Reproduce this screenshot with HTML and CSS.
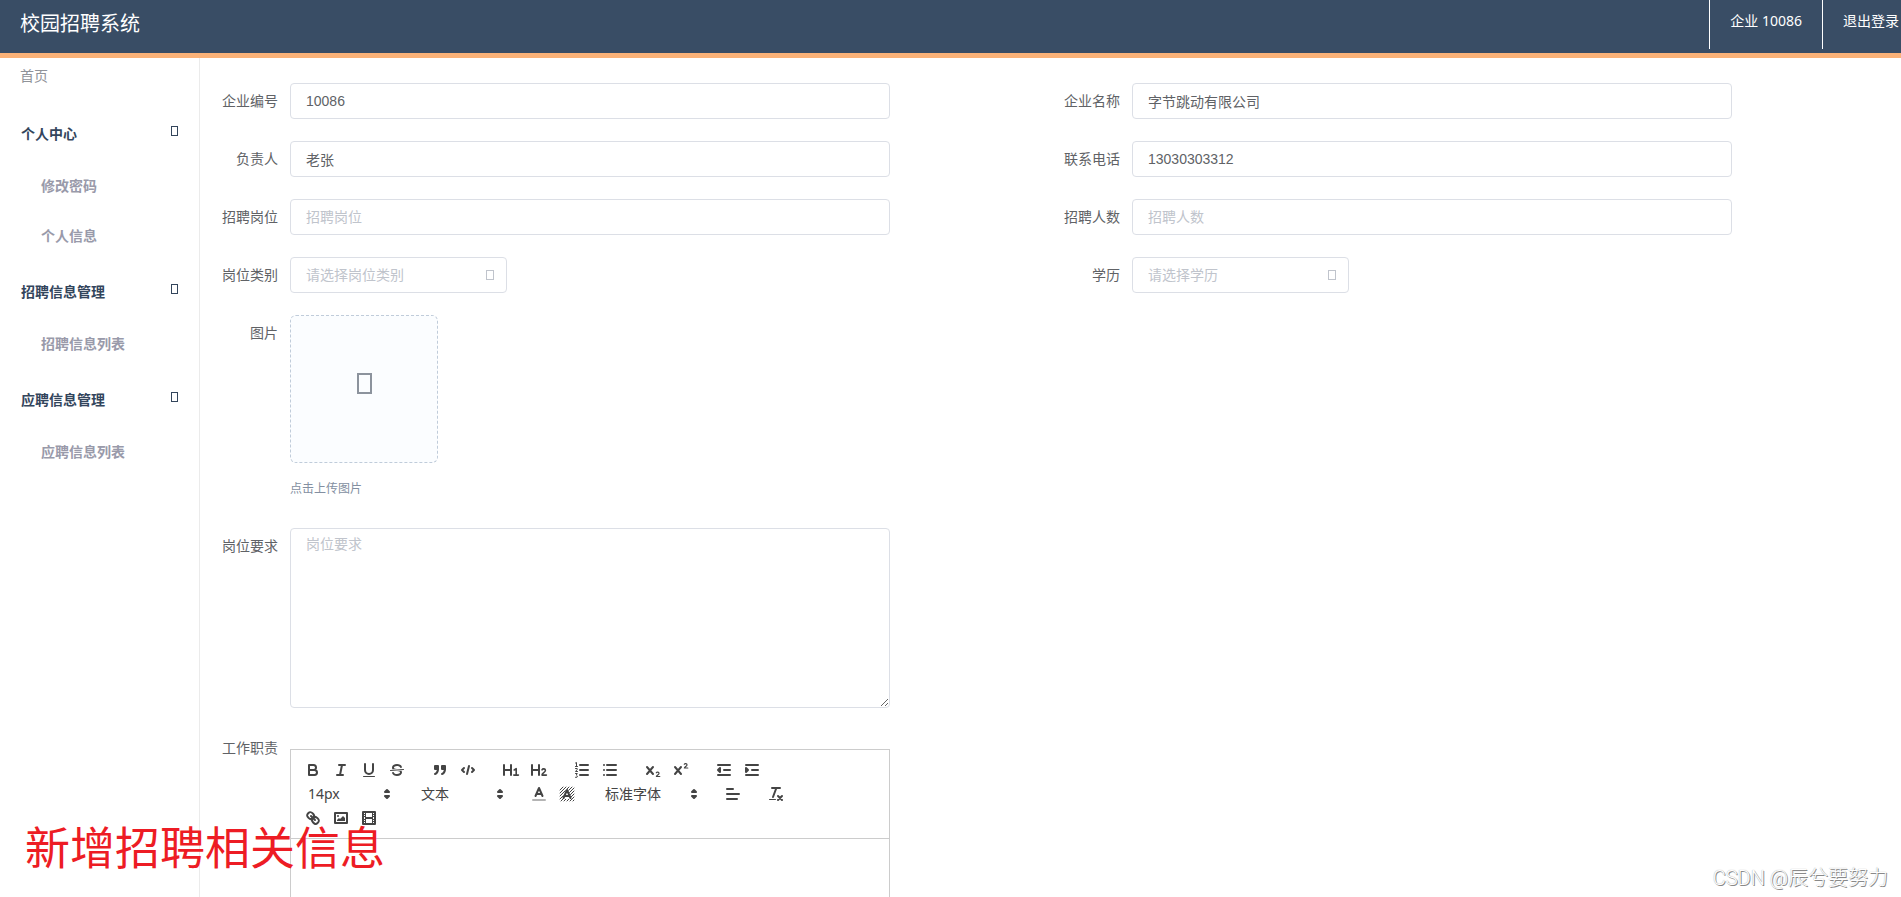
FILE: index.html
```html
<!DOCTYPE html>
<html lang="zh-CN">
<head>
<meta charset="utf-8">
<title>校园招聘系统</title>
<link rel="stylesheet" href="styles.css">
</head>
<body>
<header class="topbar">
  <h1 class="brand">校园招聘系统</h1>
  <nav class="account">
    <a class="account-link" href="#">企业 10086</a>
    <a class="account-link account-exit" href="#">退出登录</a>
  </nav>
</header>
<div class="layout">
  <nav class="sidebar">
    <a class="home" href="#">首页</a>
    <button class="group" type="button">个人中心<span class="box"></span></button>
    <a class="entry" href="#">修改密码</a>
    <a class="entry" href="#">个人信息</a>
    <button class="group" type="button">招聘信息管理<span class="box"></span></button>
    <a class="entry" href="#">招聘信息列表</a>
    <button class="group" type="button">应聘信息管理<span class="box"></span></button>
    <a class="entry" href="#">应聘信息列表</a>
  </nav>
  <main class="content">
    <form class="form">
      <div class="field"><label class="label" for="code">企业编号</label><input class="control" id="code" type="text" value="10086"></div>
      <div class="field"><label class="label" for="company">企业名称</label><input class="control" id="company" type="text" value="字节跳动有限公司"></div>
      <div class="field"><label class="label" for="owner">负责人</label><input class="control" id="owner" type="text" value="老张"></div>
      <div class="field"><label class="label" for="phone">联系电话</label><input class="control" id="phone" type="text" value="13030303312"></div>
      <div class="field"><label class="label" for="post">招聘岗位</label><input class="control" id="post" type="text" placeholder="招聘岗位"></div>
      <div class="field"><label class="label" for="count">招聘人数</label><input class="control" id="count" type="text" placeholder="招聘人数"></div>
      <div class="field"><label class="label" for="kind">岗位类别</label>
        <div class="select"><select class="control choice" id="kind"><option>请选择岗位类别</option></select><span class="box box-muted"></span></div></div>
      <div class="field"><label class="label" for="degree">学历</label>
        <div class="select"><select class="control choice" id="degree"><option>请选择学历</option></select><span class="box box-muted"></span></div></div>
      <div class="field field-row"><label class="label" for="picture">图片</label>
        <div class="upload">
          <button class="upload-card" id="picture" type="button" aria-label="上传图片"><span class="box box-large"></span></button>
          <p class="upload-tip">点击上传图片</p>
        </div></div>
      <div class="field field-row"><label class="label" for="demand">岗位要求</label><textarea class="control area" id="demand" placeholder="岗位要求"></textarea></div>
      <div class="field field-row"><label class="label" for="duty">工作职责</label>
        <div class="editor">
          <div class="toolbar">
            <span class="tools">
              <button class="tool" type="button" aria-label="粗体"><svg viewBox="0 0 18 18"><path d="M5 4H9.5A2.5 2.5 0 0 1 9.5 9H5ZM5 9H10.5A2.5 2.5 0 0 1 10.5 14H5Z"/></svg></button>
              <button class="tool" type="button" aria-label="斜体"><svg viewBox="0 0 18 18"><path d="M7 4H13M5 14H11M8 14L10 4"/></svg></button>
              <button class="tool" type="button" aria-label="下划线"><svg viewBox="0 0 18 18"><path d="M5 3V9a4 4 0 0 0 8 0V3"/><rect class="solid" x="3" y="15" width="12" height="1" rx=".5"/></svg></button>
              <button class="tool" type="button" aria-label="删除线"><svg viewBox="0 0 18 18"><path class="thin" d="M15.5 8.5L2.5 9.5"/><path class="solid" d="M9.007,8C6.542,7.791,6,7.519,6,6.5,6,5.792,7.283,5,9,5c1.571,0,2.765.679,2.969,1.309a1,1,0,0,0,1.9-.617C13.356,4.106,11.354,3,9,3,6.2,3,4,4.538,4,6.5a3.2,3.2,0,0,0,.5,1.843Z"/><path class="solid" d="M8.984,10C11.457,10.208,12,10.479,12,11.5c0,.708-1.283,1.5-3,1.5-1.571,0-2.765-.679-2.969-1.309a1,1,0,1,0-1.9.617C4.644,13.894,6.646,15,9,15c2.8,0,5-1.538,5-3.5a3.2,3.2,0,0,0-.5-1.843Z"/></svg></button>
            </span>
            <span class="tools">
              <button class="tool" type="button" aria-label="引用"><svg viewBox="0 0 18 18"><g class="filled"><rect x="4" y="5" width="3" height="3"/><rect x="11" y="5" width="3" height="3"/><path d="M7,8c0,4.031-3,5-3,5"/><path d="M14,8c0,4.031-3,5-3,5"/></g></svg></button>
              <button class="tool" type="button" aria-label="代码"><svg viewBox="0 0 18 18"><path d="M5 7L3 9L5 11M13 7L15 9L13 11M10 5L8 13"/></svg></button>
            </span>
            <span class="tools">
              <button class="tool" type="button" aria-label="标题 1"><svg viewBox="0 0 18 18"><path d="M2 4V14M9 4V14M2 9H9"/><path class="mid" d="M12.2 9L14.2 7.7V14M11.8 14.1H16.4"/></svg></button>
              <button class="tool" type="button" aria-label="标题 2"><svg viewBox="0 0 18 18"><path d="M2 4V14M9 4V14M2 9H9"/><path class="mid" d="M12 8.8C12.8 7.3 15.5 7.6 15.4 9.5C15.3 11.4 12 12 12 14.1H16.4"/></svg></button>
            </span>
            <span class="tools">
              <button class="tool" type="button" aria-label="有序列表"><svg viewBox="0 0 18 18"><path d="M7 4H15M7 9H15M7 14H15"/><path class="thin" d="M2.5 2L3.5 1.5V5.5M2.5 5.5H4.5M2.5 7.5H4.2V8.5L2.5 10.5H4.5M2.5 12.5H4.3L3.3 14L4.4 15L3.9 16.3H2.5"/></svg></button>
              <button class="tool" type="button" aria-label="无序列表"><svg viewBox="0 0 18 18"><path d="M6 4H15M6 9H15M6 14H15M3 4V4M3 9V9M3 14V14"/></svg></button>
            </span>
            <span class="tools">
              <button class="tool" type="button" aria-label="下标"><svg viewBox="0 0 18 18"><path d="M3 6L9 13M9 6L3 13"/><path class="digit" d="M12.3 11.8C12.9 10.8 15.2 11 15 12.5C14.9 13.7 12.6 14.4 12.4 15.5H15.8"/></svg></button>
              <button class="tool" type="button" aria-label="上标"><svg viewBox="0 0 18 18"><path d="M3 6L9 13M9 6L3 13"/><path class="digit" d="M12.3 3.3C12.9 2.3 15.2 2.5 15 4C14.9 5.2 12.6 5.9 12.4 7H15.8"/></svg></button>
            </span>
            <span class="tools">
              <button class="tool" type="button" aria-label="减少缩进"><svg viewBox="0 0 18 18"><path d="M3 4H15M9 9H15M3 14H15"/><path class="filled" d="M5 7V11L3 9Z"/></svg></button>
              <button class="tool" type="button" aria-label="增加缩进"><svg viewBox="0 0 18 18"><path d="M3 4H15M9 9H15M3 14H15"/><path class="filled" d="M3 7V11L5 9Z"/></svg></button>
            </span>
            <span class="tools picker">
              <select class="pick" aria-label="字号"><option>14px</option></select>
              <svg class="arrows" viewBox="0 0 18 18"><path class="filled" d="M7 11L9 13L11 11ZM7 7L9 5L11 7Z"/></svg>
            </span>
            <span class="tools picker">
              <select class="pick" aria-label="段落格式"><option>文本</option></select>
              <svg class="arrows" viewBox="0 0 18 18"><path class="filled" d="M7 11L9 13L11 11ZM7 7L9 5L11 7Z"/></svg>
            </span>
            <span class="tools">
              <button class="tool" type="button" aria-label="文字颜色"><svg viewBox="0 0 18 18"><path class="faint" d="M3 15H15"/><path d="M5.5 11L9 3L12.5 11M11.6 9H6.4"/></svg></button>
              <button class="tool" type="button" aria-label="背景颜色"><svg viewBox="0 0 18 18"><path class="hatch" d="M2 5L5 2M2 8L8 2M2 11L11 2M2 14L14 2M3 16L16 3M6 16L16 6M9 16L16 9M12 16L16 12M15 16L16 15"/><path class="halo" d="M5.5 13L9 5L12.5 13Z"/><path d="M5.5 13L9 5L12.5 13M11.6 11H6.4"/></svg></button>
            </span>
            <span class="tools picker picker-wide">
              <select class="pick" aria-label="字体"><option>标准字体</option></select>
              <svg class="arrows" viewBox="0 0 18 18"><path class="filled" d="M7 11L9 13L11 11ZM7 7L9 5L11 7Z"/></svg>
            </span>
            <span class="tools">
              <button class="tool" type="button" aria-label="对齐"><svg viewBox="0 0 18 18"><path d="M3 4H9M3 9H15M3 14H13"/></svg></button>
            </span>
            <span class="tools">
              <button class="tool" type="button" aria-label="清除格式"><svg viewBox="0 0 18 18"><path d="M5 3H13M6 12L9.35 3M11 11L15 15M15 11L11 15"/><rect class="solid" x="2" y="14" width="7" height="1" rx=".5"/></svg></button>
            </span>
            <span class="tools">
              <button class="tool" type="button" aria-label="链接"><svg viewBox="0 0 18 18"><path d="M7 7L11 11"/><path d="M8.9,4.577a3.476,3.476,0,0,1,.36,4.679A3.476,3.476,0,0,1,4.577,8.9C3.185,7.5,2.035,6.4,4.217,4.217S7.5,3.185,8.9,4.577Z"/><path d="M13.423,9.1a3.476,3.476,0,0,0-4.679-.36,3.476,3.476,0,0,0,.36,4.679c1.392,1.392,2.5,2.542,4.679.36S14.815,10.5,13.423,9.1Z"/></svg></button>
              <button class="tool" type="button" aria-label="图片"><svg viewBox="0 0 18 18"><rect x="3" y="4" width="12" height="10"/><circle class="solid" cx="6" cy="7" r="1"/><path class="solid" d="M5 12V11L7 9L8 10L11 7L13 9V12Z"/></svg></button>
              <button class="tool" type="button" aria-label="视频"><svg viewBox="0 0 18 18"><rect x="3" y="3" width="12" height="12"/><path class="solid" d="M5 3H6V15H5ZM12 3H13V15H12ZM5 8H13V10H5ZM3 5H6V6H3ZM3 7H6V8H3ZM3 10H6V11H3ZM3 12H6V13H3ZM12 5H15V6H12ZM12 7H15V8H12ZM12 10H15V11H12ZM12 12H15V13H12Z"/></svg></button>
            </span>
          </div>
          <textarea class="editor-body" id="duty"></textarea>
        </div></div>
    </form>
  </main>
</div>
<p class="caption">新增招聘相关信息</p>
<p class="watermark">CSDN @辰兮要努力</p>
</body>
</html>
```
FILE: styles.css
```css
* { box-sizing: border-box; }

body {
  margin: 0;
  height: 100vh;
  overflow: hidden;
  display: flex;
  flex-direction: column;
  font: 14px/20px "Liberation Sans", "Noto Sans CJK SC", sans-serif;
  color: #606266;
  background: #fff;
}

button, input, select, textarea { font: inherit; color: inherit; }
a { color: inherit; text-decoration: none; }
p { margin: 0; }

.topbar {
  flex: none;
  display: flex;
  justify-content: space-between;
  align-items: flex-start;
  height: 58px;
  background: #394d65;
  border-bottom: 5px solid #fbb278;
  color: #fff;
}
.brand {
  margin: 0;
  padding-left: 20px;
  font-size: 20px;
  font-weight: 400;
  line-height: 48px;
}
.account {
  display: flex;
  font-family: "Noto Sans", "Noto Sans CJK SC", sans-serif;
}
.account-link {
  height: 49px;
  padding: 0 20px;
  border-left: 1px solid #fff;
  line-height: 42px;
}
.account-exit { padding-right: 2px; }

.layout { flex: 1; min-height: 0; display: flex; }

.sidebar {
  flex: none;
  width: 200px;
  display: flex;
  flex-direction: column;
  border-right: 1px solid #ebebeb;
}
.home {
  margin-bottom: 9px;
  padding-left: 20px;
  line-height: 36px;
  color: #909399;
}
.group {
  display: flex;
  justify-content: space-between;
  align-items: center;
  padding: 4px 21px 0;
  border: 0;
  background: none;
  line-height: 54px;
  font-weight: 700;
  color: #33455c;
}
.entry {
  padding-left: 41px;
  line-height: 50px;
  font-weight: 700;
  color: #999aaa;
}

.box {
  width: 7px;
  height: 10px;
  margin-bottom: 6px;
  border: 1px solid currentColor;
}
.box-muted {
  position: absolute;
  top: 13px;
  right: 13px;
  width: 8px;
  color: #c0c4cc;
}
.box-large {
  width: 15px;
  height: 21px;
  margin: 0;
  border-width: 2px;
}

.content { flex: 1; min-width: 0; padding: 25px 7px 0 10px; }
.form {
  display: grid;
  grid-template-columns: 1fr 1fr;
  row-gap: 22px;
}
.field { display: flex; align-items: flex-start; }
.field-row { grid-column: 1 / -1; }
.label {
  flex: none;
  width: 80px;
  padding-right: 12px;
  text-align: right;
  line-height: 36px;
}
.control {
  width: 600px;
  height: 36px;
  padding: 0 15px;
  border: 1px solid #dcdfe6;
  border-radius: 4px;
  background: #fff;
  outline: none;
}
.control::placeholder { color: #c0c4cc; }
.select { position: relative; width: 217px; }
.choice {
  display: block;
  width: 100%;
  appearance: none;
  color: #c0c4cc;
}
.area {
  height: 180px;
  padding: 5px 15px;
  line-height: 21px;
  resize: vertical;
}

.upload-card {
  display: flex;
  align-items: center;
  justify-content: center;
  width: 148px;
  height: 148px;
  padding: 0 0 12px;
  border: 1px dashed #c0ccda;
  border-radius: 6px;
  background: #fbfdff;
  color: #8c939d;
}
.upload-tip {
  padding-top: 9px;
  font-size: 12px;
  line-height: 34px;
  color: #838fa1;
}

.editor { width: 600px; margin-top: 19px; }
.toolbar {
  display: flex;
  flex-wrap: wrap;
  padding: 8px;
  border: 1px solid #ccc;
}
.tools { display: flex; margin-right: 15px; }
.tool {
  width: 28px;
  height: 24px;
  padding: 3px 5px;
  border: 0;
  background: none;
}
.tool svg, .arrows {
  display: block;
  width: 18px;
  height: 18px;
  fill: none;
  stroke: #444;
  stroke-width: 2;
  stroke-linecap: round;
  stroke-linejoin: round;
}
.tool .solid { fill: #444; stroke: none; }
.tool .filled, .arrows .filled { fill: #444; }
.tool .thin { stroke-width: 1; }
.tool .digit { stroke-width: 1.2; }
.tool .mid { stroke-width: 1.6; }
.tool .faint { opacity: .4; }
.tool .hatch { stroke-width: 1; }
.tool .halo { fill: #fff; stroke: #fff; stroke-width: 2; }
.picker { position: relative; width: 98px; }
.picker-wide { width: 108px; }
.pick {
  width: 100%;
  height: 24px;
  padding: 0 20px 0 9px;
  border: 0;
  background: none;
  appearance: none;
  color: #444;
  font-family: "Noto Sans", "Noto Sans CJK SC", sans-serif;
}
.arrows { position: absolute; top: 3px; right: 1px; pointer-events: none; }
.editor-body {
  display: block;
  width: 100%;
  height: 300px;
  padding: 12px 15px;
  border: 1px solid #ccc;
  border-top: 0;
  background: none;
  outline: none;
  resize: none;
}

.caption {
  position: absolute;
  left: 25px;
  bottom: 17px;
  font-size: 45px;
  line-height: 60px;
  color: #ed1c24;
}
.watermark {
  position: absolute;
  right: 13px;
  bottom: 4px;
  font-family: Roboto, "Noto Sans CJK SC", sans-serif;
  font-size: 20px;
  font-weight: 300;
  line-height: 30px;
  color: #fff;
  text-shadow: 0 0 1px #999, 1px 1px 0 #888;
}
```
